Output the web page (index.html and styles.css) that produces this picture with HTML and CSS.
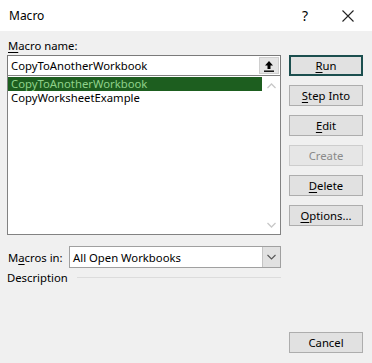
FILE: index.html
```html
<!DOCTYPE html>
<html lang="en">
<head>
  <meta charset="UTF-8">
  <title>Macro</title>
  <link rel="stylesheet" href="styles.css">
</head>
<body>

  <div class="titlebar">
    <span class="title">Macro</span>
    <span class="help">?</span>
    <svg class="close" width="12" height="12" viewBox="0 0 12 12">
      <path d="M0.5 0.5 L11.5 11.5 M11.5 0.5 L0.5 11.5" stroke="#222" stroke-width="1.1" fill="none"/>
    </svg>
  </div>

  <div class="dialog">
    <div class="left">
      <div class="label"><u>M</u>acro name:</div>
      <div class="namebox">
        <span class="nametext">CopyToAnotherWorkbook</span>
        <span class="upbtn">
          <svg width="10" height="12" viewBox="0 0 10 12">
            <path d="M5 1 L1 5.5 H3.5 V9 H6.5 V5.5 H9 Z" fill="#000"/>
            <rect x="0" y="10.5" width="10" height="1.4" fill="#000"/>
          </svg>
        </span>
      </div>
      <div class="listbox">
        <div class="items">
          <div class="item selected">CopyToAnotherWorkbook</div>
          <div class="item">CopyWorksheetExample</div>
        </div>
        <div class="scroll">
          <svg width="9" height="6" viewBox="0 0 9 6"><path d="M0.5 5 L4.5 1 L8.5 5" stroke="#c8c8c8" stroke-width="1.3" fill="none"/></svg>
          <svg width="9" height="6" viewBox="0 0 9 6"><path d="M0.5 1 L4.5 5 L8.5 1" stroke="#c8c8c8" stroke-width="1.3" fill="none"/></svg>
        </div>
      </div>

      <div class="row-in">
        <span class="label-in">M<u>a</u>cros in:</span>
        <div class="combo">
          <span class="combotext">All Open Workbooks</span>
          <span class="dropbtn">
            <svg width="9" height="6" viewBox="0 0 9 6"><path d="M0.5 1 L4.5 5 L8.5 1" stroke="#555" stroke-width="1.1" fill="none"/></svg>
          </span>
        </div>
      </div>

      <div class="desc">
        <span>Description</span>
        <span class="rule"></span>
      </div>
    </div>

    <div class="buttons">
      <button class="btn default"><u>R</u>un</button>
      <button class="btn"><u>S</u>tep Into</button>
      <button class="btn"><u>E</u>dit</button>
      <button class="btn disabled">Create</button>
      <button class="btn"><u>D</u>elete</button>
      <button class="btn"><u>O</u>ptions...</button>
      <button class="btn cancel">Cancel</button>
    </div>
  </div>

</body>
</html>
```

FILE: styles.css
```css
/* Dialog im Windows-Stil */
body {
  margin: 0;
  background: #f0f0f0;
  font-family: "Noto Sans", "Open Sans", sans-serif;
  font-size: 11.3px;
  color: #000;
  width: 372px;
  height: 363px;
  overflow: hidden;
}
u { text-decoration-thickness: 1px; text-underline-offset: 2px; }

/* Titelleiste */
.titlebar {
  height: 31px;
  background: #fff;
  display: flex;
  align-items: center;
  padding-left: 9px;
}
.title { flex: 1; font-size: 12px; }
.help {
  font-size: 14px;
  margin-right: 34px;
}
.close { margin-right: 18px; }

/* Inhalt */
.dialog {
  display: flex;
  padding: 6px 9px 0 7px;
}
.left {
  width: 274px;
  display: flex;
  flex-direction: column;
}
.label {
  padding-left: 1px;
  height: 18px;
  line-height: 18px;
}
.namebox {
  height: 19px;
  border: 1px solid #7a7a7a;
  border-bottom: none;
  background: #fff;
  display: flex;
  align-items: center;
}
.nametext { flex: 1; padding-left: 3px; }
.upbtn {
  width: 20px;
  height: 17px;
  margin-right: 1px;
  background: #e5e5e5;
  border: 1px solid #cfcfcf;
  box-sizing: border-box;
  display: flex;
  align-items: center;
  justify-content: center;
}
.listbox {
  height: 158px;
  border: 1px solid #828282;
  background: #fff;
  display: flex;
}
.items { flex: 1; padding-top: 1px; }
.item {
  height: 14px;
  line-height: 14px;
  padding-left: 3px;
  overflow: hidden;
}
.item.selected {
  background: #1d5e1f;
  color: #8fd18a;
}
.scroll {
  width: 18px;
  display: flex;
  flex-direction: column;
  justify-content: space-between;
  align-items: center;
  padding: 7px 0 6px;
}

/* Makros in */
.row-in {
  display: flex;
  align-items: center;
  margin-top: 11px;
  height: 22px;
}
.label-in { width: 61px; padding-left: 1px; }
.combo {
  flex: 1;
  height: 20px;
  border: 1px solid #a0a0a0;
  background: #fff;
  display: flex;
  align-items: center;
}
.combotext { flex: 1; padding-left: 3px; }
.dropbtn {
  width: 17px;
  height: 20px;
  background: #e1e1e1;
  border-left: 1px solid #c4c4c4;
  display: flex;
  align-items: center;
  justify-content: center;
}
.desc {
  display: flex;
  align-items: center;
  height: 18px;
}
.desc .rule {
  flex: 1;
  margin-left: 9px;
  border-top: 1px solid #dcdcdc;
}

/* Schaltflaechen */
.buttons {
  margin-left: 8px;
  padding-top: 18px;
  display: flex;
  flex-direction: column;
  gap: 9px;
}
.btn {
  width: 74px;
  height: 21px;
  padding: 0;
  font: inherit;
  background: #e1e1e1;
  border: 1px solid #adadad;
  color: #000;
}
.btn.default {
  border: 2px solid #1c4f4f;
}
.btn.disabled { color: #8a8a8a; background: #e6e6e6; border-color: #cdcdcd; }
.btn.cancel { margin-top: 97px; }
```
